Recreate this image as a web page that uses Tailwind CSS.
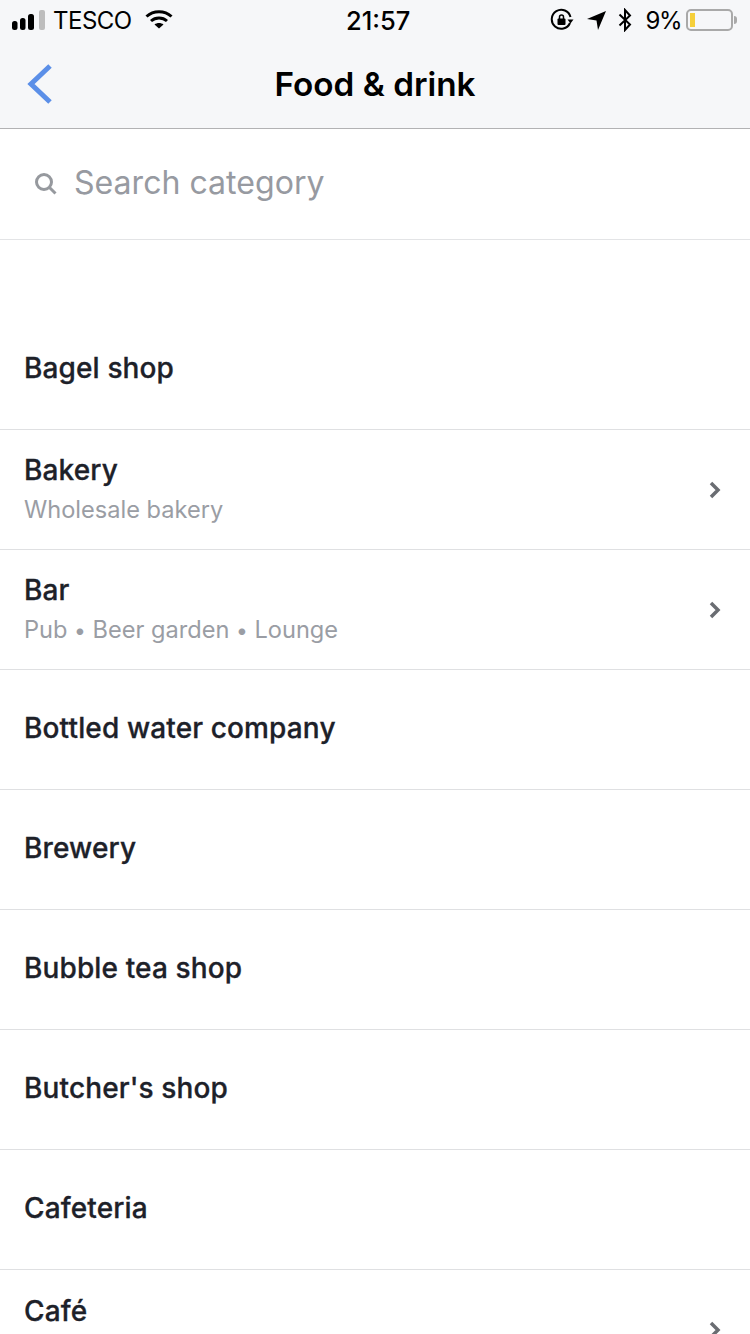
<!DOCTYPE html>
<html lang="en">
<head>
  <meta charset="UTF-8" />
  <meta name="viewport" content="width=device-width, initial-scale=1.0" />
  <title>Food &amp; drink</title>
  <script src="https://cdn.jsdelivr.net/npm/@tailwindcss/browser@4"></script>
</head>
<body class="w-[750px] h-[1334px] overflow-hidden bg-white font-['Inter','Liberation_Sans',sans-serif] text-[#1d2129]">

  <header class="h-[129px] bg-[#f6f7f9] border-b border-[#b2b2b4]">
    <div class="relative h-[40px] flex items-center justify-between pl-[12px] pr-[13px] text-black">
      <div class="flex items-center">
        <svg width="34" height="20" viewBox="0 0 34 20" fill="currentColor"><rect x="0" y="11" width="5.500" height="9" rx="2.500"/><rect x="8" y="8" width="5.500" height="12" rx="2.500"/><rect x="16" y="4" width="6" height="16" rx="2.500"/><rect x="27" y="0" width="6" height="20" rx="2" fill="#bdbdbd"/></svg>
        <span class="ml-[7px] pt-[2px] text-[24px] leading-none tracking-[-0.5px]">TESCO</span>
        <svg class="ml-[13px] mb-[3px]" width="28" height="20" viewBox="0 0 28 20" fill="none" stroke="currentColor" stroke-width="3"><path d="M1.500 7.500C8.500 1 19.500 1 26.500 7.500"/><path d="M6 12C10.500 8 17.500 8 22 12"/><path d="M14 19.500L9.500 15.500C12 13.500 16 13.500 18.500 15.500Z" fill="currentColor" stroke="none"/></svg>
      </div>
      <span class="absolute left-[346px] top-[8px] text-[25.500px] leading-none font-medium">21:57</span>
      <div class="flex items-center">
        <svg width="24" height="24" viewBox="0 0 24 24" fill="none" stroke="currentColor" stroke-width="2"><path d="M20 15A9.500 9.500 0 1 1 20.500 9"/><path d="M17.500 11.500H23.500L20.500 15.500Z" fill="currentColor" stroke="none"/><rect x="7.500" y="10.500" width="8" height="6.500" rx="1" fill="currentColor" stroke="none"/><path d="M9.500 11V9A2 2 0 0 1 13.500 9V11" stroke-width="1.500"/></svg>
        <svg class="ml-[13px]" width="20" height="20" viewBox="0 0 20 20" fill="currentColor"><path d="M19 1L11 20L9.500 10.500L0 9Z"/></svg>
        <svg class="ml-[11px]" width="14" height="24" viewBox="0 0 14 24" fill="none" stroke="currentColor" stroke-width="2"><path d="M1.500 6.500L12 16.500L7 22V2L12 7.500L1.500 17.500"/></svg>
        <span class="ml-[14px] pt-[2px] text-[24px] leading-none tracking-[-1.500px]">9%</span>
        <div class="ml-[5px] w-[47px] h-[22px] border-2 border-[#a9a9a9] rounded-[5px] p-[2px]">
          <div class="w-[5px] h-full bg-[#f5cf3a]"></div>
        </div>
        <div class="ml-[1px] w-[3px] h-[8px] bg-[#a9a9a9] rounded-r-full"></div>
      </div>
    </div>
    <div class="relative h-[88px] flex items-center justify-center">
      <svg class="absolute left-[26px] top-[24px]" width="27" height="40" viewBox="0 0 27 40" fill="none" stroke="#5b8fe8" stroke-width="5"><path d="M24 2L5 20L24 38"/></svg>
      <h1 class="pt-[2px] text-[33.300px] leading-none font-semibold text-black">Food &amp; drink</h1>
    </div>
  </header>

  <div class="h-[111px] flex items-center pl-[34px] pb-[2px] border-b border-[#e3e4e6]">
    <svg width="23" height="23" viewBox="0 0 23 23" fill="none" stroke="#96999e" stroke-width="3"><circle cx="10" cy="10" r="7.500"/><path d="M15.500 15.500L21.500 21.500"/></svg>
    <span class="ml-[17px] text-[32.100px] leading-none text-[#979aa1]">Search category</span>
  </div>

  <ul>
    <li class="h-[190px] pt-[66px] flex items-center px-[24px] border-b border-[#dfe0e2]"><span class="text-[28px] font-medium tracking-[0.13px] [-webkit-text-stroke:0.3px_#1d2129]">Bagel shop</span></li>
    <li class="h-[120px] flex items-center justify-between pl-[24px] pr-[29px] border-b border-[#dfe0e2]">
      <div>
        <p class="text-[28px] leading-[40px] font-medium tracking-[0.13px] [-webkit-text-stroke:0.3px_#1d2129]">Bakery</p>
        <p class="text-[23.600px] leading-[39px] text-[#9a9da4]">Wholesale bakery</p>
      </div>
      <svg width="12" height="18" viewBox="0 0 12 18" fill="none" stroke="#6a6d72" stroke-width="3.500"><path d="M2 2L9 9L2 16"/></svg>
    </li>
    <li class="h-[120px] flex items-center justify-between pl-[24px] pr-[29px] border-b border-[#dfe0e2]">
      <div>
        <p class="text-[28px] leading-[40px] font-medium tracking-[0.13px] [-webkit-text-stroke:0.3px_#1d2129]">Bar</p>
        <p class="text-[23.600px] leading-[39px] text-[#9a9da4]">Pub <span class="text-[21px] leading-none">•</span> Beer garden <span class="text-[21px] leading-none">•</span> Lounge</p>
      </div>
      <svg width="12" height="18" viewBox="0 0 12 18" fill="none" stroke="#6a6d72" stroke-width="3.500"><path d="M2 2L9 9L2 16"/></svg>
    </li>
    <li class="h-[120px] flex items-center px-[24px] pb-[4px] border-b border-[#dfe0e2]"><span class="text-[28px] font-medium tracking-[0.13px] [-webkit-text-stroke:0.3px_#1d2129]">Bottled water company</span></li>
    <li class="h-[120px] flex items-center px-[24px] pb-[4px] border-b border-[#dfe0e2]"><span class="text-[28px] font-medium tracking-[0.13px] [-webkit-text-stroke:0.3px_#1d2129]">Brewery</span></li>
    <li class="h-[120px] flex items-center px-[24px] pb-[4px] border-b border-[#dfe0e2]"><span class="text-[28px] font-medium tracking-[0.13px] [-webkit-text-stroke:0.3px_#1d2129]">Bubble tea shop</span></li>
    <li class="h-[120px] flex items-center px-[24px] pb-[4px] border-b border-[#dfe0e2]"><span class="text-[28px] font-medium tracking-[0.13px] [-webkit-text-stroke:0.3px_#1d2129]">Butcher's shop</span></li>
    <li class="h-[120px] flex items-center px-[24px] pb-[4px] border-b border-[#dfe0e2]"><span class="text-[28px] font-medium tracking-[0.13px] [-webkit-text-stroke:0.3px_#1d2129]">Cafeteria</span></li>
    <li class="h-[120px] flex items-center justify-between pl-[24px] pr-[29px]">
      <div>
        <p class="text-[28px] leading-[40px] font-medium tracking-[0.13px] [-webkit-text-stroke:0.3px_#1d2129]">Café</p>
        <p class="text-[23.600px] leading-[39px]">&nbsp;</p>
      </div>
      <svg width="12" height="18" viewBox="0 0 12 18" fill="none" stroke="#6a6d72" stroke-width="3.500"><path d="M2 2L9 9L2 16"/></svg>
    </li>
  </ul>

</body>
</html>
